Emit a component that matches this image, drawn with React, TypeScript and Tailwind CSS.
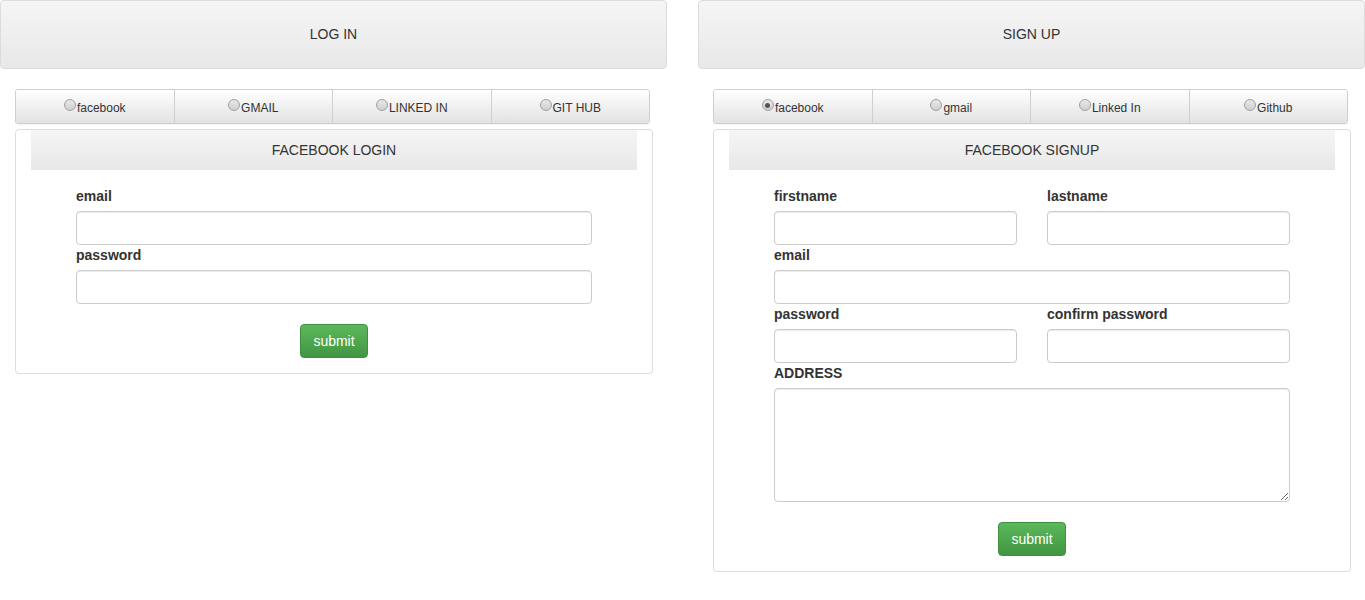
import React from "react";

const font = { fontFamily: '"Liberation Sans", Arial, Helvetica, sans-serif' };

function Radio({ checked }: { checked?: boolean }) {
  return (
    <span className="relative inline-block w-[12px] h-[12px] rounded-full border border-[#a0a0a0] bg-gradient-to-b from-[#e8e8e8] to-[#d0d0d0] -translate-y-[3px] mr-[1px] align-middle">
      {checked && (
        <span className="absolute left-[2.5px] top-[2.5px] w-[5px] h-[5px] rounded-full bg-[#555]" />
      )}
    </span>
  );
}

function Tabs({ items, active }: { items: string[]; active?: number }) {
  return (
    <div className="flex w-[635px] h-[35px] border border-[#cfcfcf] rounded-[3px] overflow-hidden shadow-[0_1px_1px_rgba(0,0,0,0.05)]">
      {items.map((t, i) => (
        <div
          key={t}
          className={
            "flex-1 flex items-center justify-center bg-gradient-to-b from-white to-[#e2e2e2] text-[12px] text-[#333] " +
            (i > 0 ? "border-l border-[#cfcfcf]" : "")
          }
        >
          <span className="translate-y-[1px]">
            <Radio checked={active === i} />
            {t}
          </span>
        </div>
      ))}
    </div>
  );
}

function Label({ children }: { children: React.ReactNode }) {
  return <div className="h-[20px] leading-[20px] mb-[5px] text-[14px] font-bold text-[#333]">{children}</div>;
}

function Input() {
  return (
    <input className="block w-full h-[34px] border border-[#ccc] rounded-[4px] bg-white shadow-[inset_0_1px_1px_rgba(0,0,0,0.075)] outline-none" />
  );
}

function Submit() {
  return (
    <div className="flex justify-center mt-[20px]">
      <button className="w-[68px] h-[34px] rounded-[4px] border border-[#3e8f3e] bg-gradient-to-b from-[#5cb85c] to-[#419641] text-white text-[14px]">
        submit
      </button>
    </div>
  );
}

function TopBox({ title }: { title: string }) {
  return (
    <div className="h-[69px] border border-[#dcdcdc] rounded-[4px] bg-gradient-to-b from-[#f5f5f5] to-[#e8e8e8] flex items-center justify-center text-[14px] text-[#333]">
      {title}
    </div>
  );
}

function Panel({ title, children }: { title: string; children: React.ReactNode }) {
  return (
    <div className="mt-[5px] w-[638px] border border-[#ddd] rounded-[4px] bg-white pl-[15px] pr-[15px] pb-[15px]">
      <div className="h-[40px] bg-gradient-to-b from-[#f5f5f5] to-[#e8e8e8] flex items-center justify-center text-[14px] text-[#333]">
        {title}
      </div>
      <div className="px-[45px] pt-[16px]">{children}</div>
    </div>
  );
}

export default function App() {
  return (
    <div className="flex gap-[31px] bg-white min-h-[600px]" style={font}>
      <div className="w-[667px]">
        <TopBox title="LOG IN" />
        <div className="ml-[15px] mt-[20px]">
          <Tabs items={["facebook", "GMAIL", "LINKED IN", "GIT HUB"]} />
          <Panel title="FACEBOOK LOGIN">
            <Label>email</Label>
            <Input />
            <Label>password</Label>
            <Input />
            <Submit />
          </Panel>
        </div>
      </div>
      <div className="w-[667px]">
        <TopBox title="SIGN UP" />
        <div className="ml-[15px] mt-[20px]">
          <Tabs items={["facebook", "gmail", "Linked In", "Github"]} active={0} />
          <Panel title="FACEBOOK SIGNUP">
            <div className="grid grid-cols-2 gap-x-[30px]">
              <div>
                <Label>firstname</Label>
                <Input />
              </div>
              <div>
                <Label>lastname</Label>
                <Input />
              </div>
            </div>
            <Label>email</Label>
            <Input />
            <div className="grid grid-cols-2 gap-x-[30px]">
              <div>
                <Label>password</Label>
                <Input />
              </div>
              <div>
                <Label>confirm password</Label>
                <Input />
              </div>
            </div>
            <Label>ADDRESS</Label>
            <textarea className="block w-full h-[114px] border border-[#ccc] rounded-[4px] bg-white shadow-[inset_0_1px_1px_rgba(0,0,0,0.075)] outline-none" />
            <Submit />
          </Panel>
        </div>
      </div>
    </div>
  );
}
